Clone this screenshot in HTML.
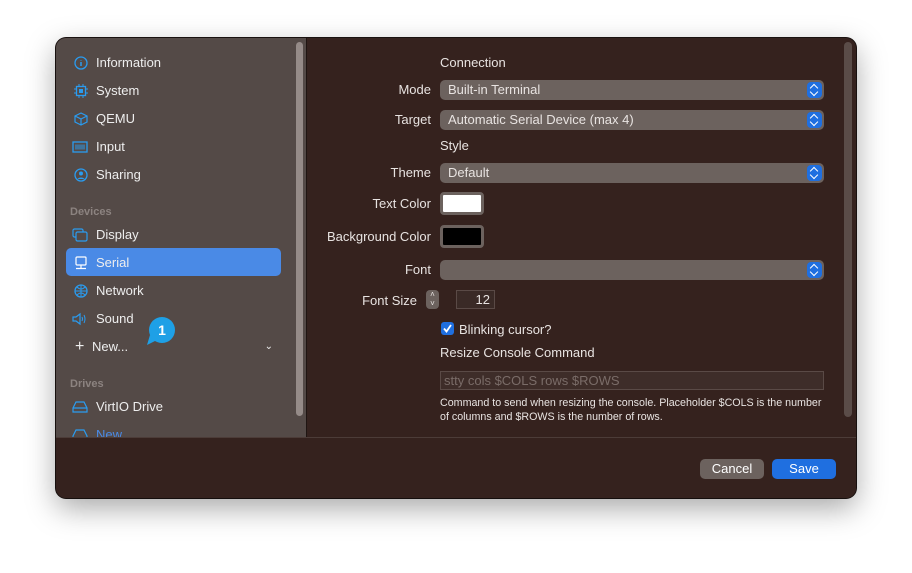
<!DOCTYPE html>
<html><head><style>
*{margin:0;padding:0;box-sizing:border-box}
body{width:912px;height:573px;background:#fff;font-family:"Liberation Sans",sans-serif;position:relative;overflow:hidden;font-size:13px;color:#e8e3e1}
.win{position:absolute;left:56px;top:38px;width:800px;height:460px;border-radius:10px;background:#35221e;box-shadow:0 10px 30px rgba(0,0,0,.35),0 0 0 1px #1c1412;overflow:hidden}
.side{position:absolute;left:0;top:0;width:250px;height:399px;background:#544a47}
.sb{position:absolute;left:240px;top:4px;width:7px;height:374px;background:#958b88;border-radius:4px}
.it{position:absolute;left:10px;width:215px;height:28px;line-height:28px;padding-left:30px;font-size:13px;color:#eee}
.it svg{position:absolute;left:8px;top:7px}
.sel{background:#4a8ae6;border-radius:5px}
.hd{position:absolute;left:14px;font-size:11px;font-weight:bold;color:#8c8380}
.abs{position:absolute}
.lbl{position:absolute;right:425px;text-align:right;white-space:nowrap}
.pop{position:absolute;left:384px;width:384px;height:20px;background:#6c625e;border-radius:5px;padding-left:8px;line-height:20px}
.pop i{position:absolute;right:2px;top:2px;width:15px;height:16px;background:#1f6fe0;border-radius:4px}
.pop i:before{content:"";position:absolute;left:4px;top:3px;width:5px;height:5px;border-left:1.5px solid #fff;border-top:1.5px solid #fff;transform:rotate(45deg);}
.pop i:after{content:"";position:absolute;left:4px;top:7px;width:5px;height:5px;border-right:1.5px solid #fff;border-bottom:1.5px solid #fff;transform:rotate(45deg);}
.bot{position:absolute;left:0;top:399px;width:800px;height:61px;background:#35221e;border-top:1px solid #4c3c38}
.btn{position:absolute;height:20px;border-radius:5px;line-height:20px;text-align:center;font-size:13px;color:#fff}
</style></head><body>
<div class="win">
<div class="side">
<div class="it" style="top:11px"><svg width="14" height="14"><circle cx="7" cy="7" r="6" fill="none" stroke="#2a9cf0" stroke-width="1.3"/><path d="M7 6v4M7 4v.5" stroke="#2a9cf0" stroke-width="1.5"/></svg>Information</div>
<div class="it" style="top:39px"><svg width="14" height="14"><rect x="2.5" y="2.5" width="9" height="9" fill="none" stroke="#2a9cf0" stroke-width="1.3"/><rect x="5" y="5" width="4" height="4" fill="#2a9cf0"/><path d="M5 0v2M9 0v2M5 12v2M9 12v2M0 5h2M0 9h2M12 5h2M12 9h2" stroke="#2a9cf0"/></svg>System</div>
<div class="it" style="top:67px"><svg width="14" height="14"><path d="M7 1l6 3v6l-6 3-6-3V4zM1 4l6 3 6-3M7 7v6" fill="none" stroke="#2a9cf0" stroke-width="1.2"/></svg>QEMU</div>
<div class="it" style="top:95px"><svg width="16" height="14" style="left:6px"><rect x="1" y="2" width="14" height="10" fill="none" stroke="#2a9cf0" stroke-width="1.3"/><rect x="3" y="4.5" width="10" height="5" fill="#2a9cf0" opacity=".5"/></svg>Input</div>
<div class="it" style="top:123px"><svg width="14" height="14"><circle cx="7" cy="7" r="6" fill="none" stroke="#2a9cf0" stroke-width="1.3"/><circle cx="7" cy="5.5" r="2" fill="#2a9cf0"/><path d="M3.5 11a4 3 0 0 1 7 0" fill="#2a9cf0"/></svg>Sharing</div>
<div class="hd" style="top:168px">Devices</div>
<div class="it" style="top:183px"><svg width="16" height="14" style="left:6px"><rect x="1" y="1" width="10" height="8" rx="1.5" fill="none" stroke="#2a9cf0" stroke-width="1.2"/><rect x="4" y="4" width="11" height="9" rx="1.5" fill="#544a47" stroke="#2a9cf0" stroke-width="1.2"/></svg>Display</div>
<div class="it sel" style="top:210px;line-height:30px"><svg width="14" height="14" style="top:8px"><rect x="2" y="1" width="10" height="8" rx="1" fill="none" stroke="#fff" stroke-width="1.2"/><path d="M7 9v3M2 12.5h10" stroke="#fff" stroke-width="1.2"/></svg>Serial</div>
<div class="it" style="top:239px"><svg width="14" height="14"><circle cx="7" cy="7" r="6" fill="none" stroke="#2a9cf0" stroke-width="1.3"/><path d="M1 7h12M7 1v12M3 3q4 4 8 0M3 11q4-4 8 0" fill="none" stroke="#2a9cf0"/></svg>Network</div>
<div class="it" style="top:267px"><svg width="16" height="14" style="left:6px"><path d="M1 5h3l4-3v10l-4-3H1z" fill="none" stroke="#2a9cf0" stroke-width="1.2"/><path d="M10 5q1 2 0 4M12 3q2 4 0 8" fill="none" stroke="#2a9cf0"/></svg>Sound</div>
<div class="it" style="top:295px;padding-left:26px"><span style="position:absolute;left:9px;font-size:16px">+</span>New...<span style="position:absolute;right:8px;font-size:10px">⌄</span></div>
<svg class="abs" style="left:89px;top:279px" width="32" height="30"><circle cx="17" cy="13" r="13" fill="#1ea0e6"/><path d="M5 18l-3 10 10-5z" fill="#1ea0e6"/><text x="17" y="18" font-family="Liberation Sans" font-weight="bold" font-size="14" fill="#fff" text-anchor="middle">1</text></svg>
<div class="hd" style="top:340px">Drives</div>
<div class="it" style="top:355px"><svg width="16" height="14" style="left:6px"><path d="M1 8l3-6h8l3 6v4H1z M1 8h14" fill="none" stroke="#2a9cf0" stroke-width="1.2"/></svg>VirtIO Drive</div>
<div class="it" style="top:383px;color:#4a8ae6"><svg width="16" height="14" style="left:6px"><path d="M1 8l3-6h8l3 6v4H1z" fill="none" stroke="#2a9cf0" stroke-width="1.2"/></svg>New...</div>
<div class="sb"></div>
</div>
<div class="abs" style="left:250px;top:0;width:1px;height:399px;background:#1f1512"></div>
<div class="abs" style="left:788px;top:4px;width:8px;height:375px;background:#5a4c48;border-radius:4px"></div>

<div class="abs" style="left:384px;top:17px">Connection</div>
<div class="lbl" style="top:44px">Mode</div><div class="pop" style="top:42px">Built-in Terminal<i></i></div>
<div class="lbl" style="top:74px">Target</div><div class="pop" style="top:72px">Automatic Serial Device (max 4)<i></i></div>
<div class="abs" style="left:384px;top:100px">Style</div>
<div class="lbl" style="top:127px">Theme</div><div class="pop" style="top:125px">Default<i></i></div>
<div class="lbl" style="top:158px">Text Color</div><div class="abs" style="left:384px;top:154px;width:44px;height:23px;background:#fff;border:3px solid #6c625e;border-radius:4px"></div>
<div class="lbl" style="top:191px">Background Color</div><div class="abs" style="left:384px;top:187px;width:44px;height:23px;background:#000;border:3px solid #6c625e;border-radius:4px"></div>
<div class="lbl" style="top:224px">Font</div><div class="pop" style="top:222px"><i></i></div>
<div class="lbl" style="top:255px;right:439px">Font Size</div>
<div class="abs" style="left:370px;top:252px;width:13px;height:19px;background:#6c625e;border-radius:4px;font-size:8px;line-height:9px;text-align:center">˄<br>˅</div>
<div class="abs" style="left:400px;top:252px;width:39px;height:19px;border:1px solid #5a4a46;background:#3a2a26;text-align:right;padding-right:4px;line-height:17px">12</div>
<div class="abs" style="left:385px;top:284px;width:13px;height:13px;background:#1f6fe0;border-radius:3px"><svg width="13" height="13"><path d="M3 6.5l2.5 3L10 3" fill="none" stroke="#fff" stroke-width="1.8"/></svg></div>
<div class="abs" style="left:403px;top:284px">Blinking cursor?</div>
<div class="abs" style="left:384px;top:307px">Resize Console Command</div>
<div class="abs" style="left:384px;top:333px;width:384px;height:19px;border:1px solid #5a4a46;background:#3e2d29;color:#7a6c68;padding-left:3px;line-height:17px">stty cols $COLS rows $ROWS</div>
<div class="abs" style="left:384px;top:359px;font-size:10.7px;line-height:13.5px;width:420px;white-space:nowrap">Command to send when resizing the console. Placeholder $COLS is the number<br>of columns and $ROWS is the number of rows.</div>

<div class="bot">
<div class="btn" style="left:644px;top:21px;width:64px;background:#6c625e">Cancel</div>
<div class="btn" style="left:716px;top:21px;width:64px;background:#1f6fe0">Save</div>
</div>
</div>
</body></html>
